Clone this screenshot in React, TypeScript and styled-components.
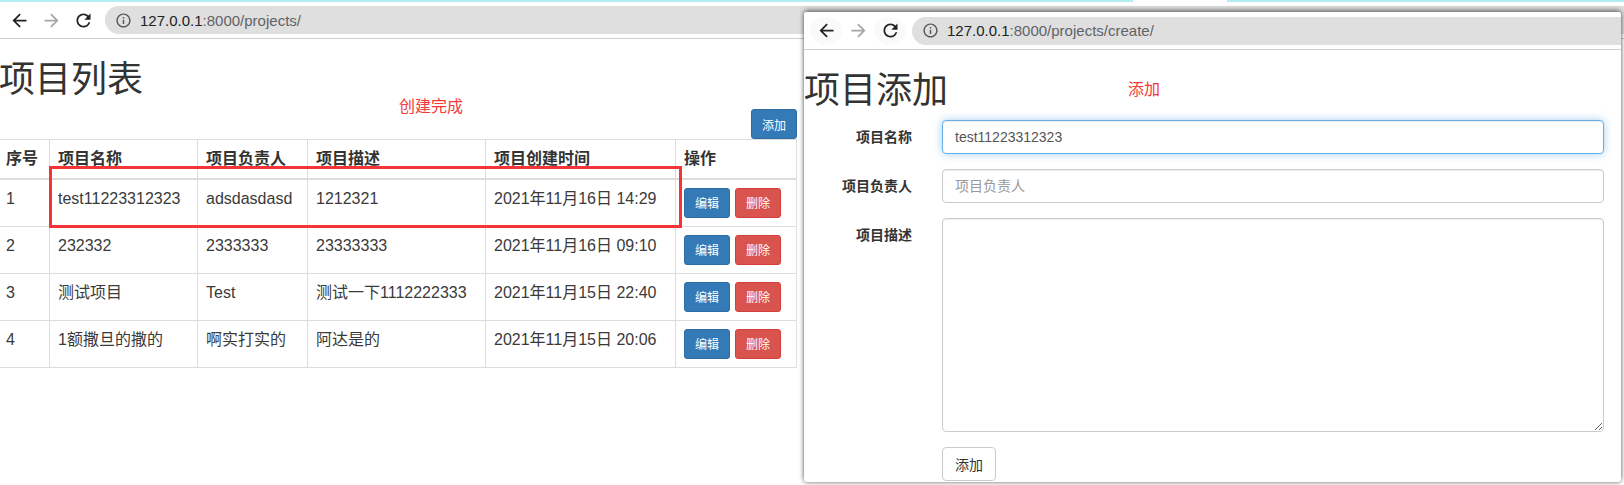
import { MdArrowBack, MdArrowForward, MdInfoOutline, MdRefresh } from 'react-icons/md';
import styled, { createGlobalStyle } from 'styled-components';

const sansStack = '"Liberation Sans", "Noto Sans CJK SC", sans-serif';

const GlobalStyle = createGlobalStyle`
  html, body {
    margin: 0;
    padding: 0;
    background: #fff;
    font-family: ${sansStack};
  }
`;

const Desktop = styled.div`
  position: relative;
  width: 1624px;
  height: 485px;
  overflow: hidden;
  background: #fff;
  color: #333;
`;

const TabStrip = styled.div`
  display: flex;
  height: 2px;
`;

const TabSegment = styled.div<{ $width: number; $on: boolean }>`
  width: ${(p) => p.$width}px;
  background: ${(p) => (p.$on ? '#b5ebf3' : '#fff')};
`;

const Toolbar = styled.div<{ $height: number; $inset: number }>`
  display: flex;
  align-items: center;
  height: ${(p) => p.$height}px;
  padding-left: ${(p) => p.$inset}px;
  background: #fff;
  border-bottom: 1px solid #cfcfcf;
  box-sizing: content-box;
`;

const NavButton = styled.span<{ $muted?: boolean; $halo?: boolean }>`
  display: flex;
  align-items: center;
  justify-content: center;
  width: 32px;
  height: 28px;
  border-radius: 50%;
  background: ${(p) => (p.$halo ? '#fafafa' : 'transparent')};
  color: ${(p) => (p.$muted ? '#a6a6a6' : '#222')};
  font-size: 21px;
`;

const UrlBar = styled.div`
  flex: 1;
  display: flex;
  align-items: center;
  gap: 8px;
  height: 28px;
  margin-left: 6px;
  padding-left: 10px;
  background: #dfdfdf;
  border-radius: 14px 0 0 14px;
  font-size: 15px;
  color: #5f6368;
  svg {
    font-size: 17px;
    color: #555;
  }
`;

const UrlHost = styled.span`
  color: #222;
`;

const MainPage = styled.div`
  width: 797px;
`;

const PageHead = styled.div`
  display: flex;
  align-items: flex-start;
  height: 100px;
`;

const Title = styled.h1`
  margin: 0;
  font-size: 36px;
  font-weight: 400;
  line-height: 40px;
  white-space: nowrap;
`;

const MainTitle = styled(Title)`
  margin-top: 21px;
  margin-left: -1px;
`;

const RedNote = styled.span<{ $left: number; $top: number }>`
  margin: ${(p) => p.$top}px 0 0 ${(p) => p.$left}px;
  color: #f43a3a;
  font-size: 16px;
  line-height: 22px;
  white-space: nowrap;
`;

const Btn = styled.button<{ $tone: 'blue' | 'red' }>`
  width: 46px;
  height: 30px;
  padding: 0;
  border: 1px solid ${(p) => (p.$tone === 'blue' ? '#2e6da4' : '#d43f3a')};
  border-radius: 3px;
  background: ${(p) => (p.$tone === 'blue' ? '#337ab7' : '#d9534f')};
  color: #fff;
  font-family: inherit;
  font-size: 12px;
`;

const AddButton = styled(Btn)`
  margin: 70px 0 0 auto;
`;

const Table = styled.table`
  width: 797px;
  margin-left: -1px;
  table-layout: fixed;
  border-collapse: collapse;
  font-size: 16px;
  line-height: 22px;
  color: #3a3a3a;
  th, td {
    border: 1px solid #ddd;
    padding: 8px 8px 6px;
    text-align: left;
    vertical-align: top;
    white-space: nowrap;
    box-sizing: border-box;
  }
  th:first-child, td:first-child {
    padding-left: 6px;
  }
  th {
    height: 39px;
    font-weight: 700;
    color: #333;
    border-bottom-width: 2px;
  }
`;

const ActionCell = styled.td`
  && {
    padding: 8px;
  }
`;

const Actions = styled.div`
  display: flex;
  gap: 5px;
`;

const Highlight = styled.div`
  position: absolute;
  left: 49px;
  top: 166px;
  width: 633px;
  height: 62px;
  box-sizing: border-box;
  border: 3px solid #f53535;
`;

const FloatingWindow = styled.div`
  position: absolute;
  left: 804px;
  top: 12px;
  width: 817px;
  height: 470px;
  background: #fff;
  border-radius: 3px;
  box-shadow: 0 -2px 5px rgba(0, 0, 0, 0.45), 0 1px 4px rgba(0, 0, 0, 0.35);
  overflow: hidden;
  display: flex;
  flex-direction: column;
`;

const FormHead = styled.div`
  display: flex;
  align-items: flex-start;
  height: 61px;
  padding-top: 21px;
  box-sizing: border-box;
`;

const Form = styled.form`
  display: flex;
  flex-direction: column;
  gap: 15px;
  margin-top: 9px;
`;

const FieldRow = styled.div`
  display: flex;
  gap: 30px;
`;

const FieldLabel = styled.label`
  width: 108px;
  padding-top: 7px;
  font-size: 14px;
  font-weight: 700;
  line-height: 20px;
  text-align: right;
`;

const fieldBase = `
  width: 662px;
  box-sizing: border-box;
  padding: 6px 12px;
  border: 1px solid #ccc;
  border-radius: 4px;
  background: #fff;
  color: #555;
  font-family: ${sansStack};
  font-size: 14px;
  line-height: 20px;
  outline: none;
  &::placeholder {
    color: #999;
  }
`;

const TextInput = styled.input<{ $focused?: boolean }>`
  ${fieldBase}
  height: 34px;
  box-shadow: ${(p) =>
    p.$focused
      ? 'inset 0 1px 1px rgba(0,0,0,.075), 0 0 8px rgba(102,175,233,.6)'
      : 'inset 0 1px 1px rgba(0,0,0,.075)'};
  border-color: ${(p) => (p.$focused ? '#66afe9' : '#ccc')};
`;

const TextArea = styled.textarea`
  ${fieldBase}
  display: block;
  height: 214px;
  box-shadow: inset 0 1px 1px rgba(0, 0, 0, 0.075);
`;

const SubmitButton = styled.button`
  width: 54px;
  height: 34px;
  margin-left: 138px;
  padding: 0;
  border: 1px solid #ccc;
  border-radius: 4px;
  background: #fff;
  color: #333;
  font-family: inherit;
  font-size: 14px;
`;

const projects = [
  ['1', 'test11223312323', 'adsdasdasd', '1212321', '2021年11月16日 14:29'],
  ['2', '232332', '2333333', '23333333', '2021年11月16日 09:10'],
  ['3', '测试项目', 'Test', '测试一下1112222333', '2021年11月15日 22:40'],
  ['4', '1额撒旦的撒的', '啊实打实的', '阿达是的', '2021年11月15日 20:06'],
];

const columnWidths = [50, 148, 110, 178, 190, 121];
const headers = ['序号', '项目名称', '项目负责人', '项目描述', '项目创建时间', '操作'];

const BrowserBar = ({
  path,
  height,
  inset,
  halo,
}: {
  path: string;
  height: number;
  inset: number;
  halo?: boolean;
}) => (
  <Toolbar $height={height} $inset={inset}>
    <NavButton $halo={halo}>
      <MdArrowBack />
    </NavButton>
    <NavButton $muted>
      <MdArrowForward />
    </NavButton>
    <NavButton $halo={halo}>
      <MdRefresh />
    </NavButton>
    <UrlBar>
      <MdInfoOutline />
      <span>
        <UrlHost>127.0.0.1</UrlHost>:8000{path}
      </span>
    </UrlBar>
  </Toolbar>
);

export default function App() {
  return (
    <Desktop>
      <GlobalStyle />
      <TabStrip>
        <TabSegment $width={1133} $on />
        <TabSegment $width={94} $on={false} />
        <TabSegment $width={397} $on />
      </TabStrip>
      <BrowserBar path="/projects/" height={36} inset={3} />
      <MainPage>
        <PageHead>
          <MainTitle>项目列表</MainTitle>
          <RedNote $left={256} $top={57}>
            创建完成
          </RedNote>
          <AddButton $tone="blue">添加</AddButton>
        </PageHead>
        <Table>
          <colgroup>
            {columnWidths.map((w, i) => (
              <col key={i} width={w} />
            ))}
          </colgroup>
          <thead>
            <tr>
              {headers.map((h) => (
                <th key={h}>{h}</th>
              ))}
            </tr>
          </thead>
          <tbody>
            {projects.map((row) => (
              <tr key={row[0]}>
                {row.map((cell, i) => (
                  <td key={i}>{cell}</td>
                ))}
                <ActionCell>
                  <Actions>
                    <Btn $tone="blue">编辑</Btn>
                    <Btn $tone="red">删除</Btn>
                  </Actions>
                </ActionCell>
              </tr>
            ))}
          </tbody>
        </Table>
      </MainPage>
      <Highlight />
      <FloatingWindow>
        <BrowserBar path="/projects/create/" height={37} inset={6} halo />
        <FormHead>
          <Title>项目添加</Title>
          <RedNote $left={180} $top={8}>
            添加
          </RedNote>
        </FormHead>
        <Form>
          <FieldRow>
            <FieldLabel>项目名称</FieldLabel>
            <TextInput $focused defaultValue="test11223312323" />
          </FieldRow>
          <FieldRow>
            <FieldLabel>项目负责人</FieldLabel>
            <TextInput placeholder="项目负责人" />
          </FieldRow>
          <FieldRow>
            <FieldLabel>项目描述</FieldLabel>
            <TextArea />
          </FieldRow>
          <SubmitButton type="button">添加</SubmitButton>
        </Form>
      </FloatingWindow>
    </Desktop>
  );
}
